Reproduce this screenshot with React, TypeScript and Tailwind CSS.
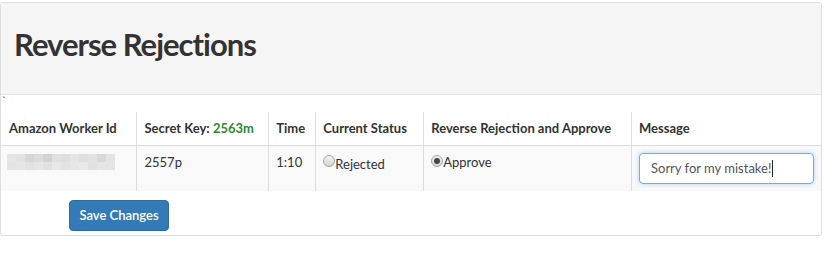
import React from 'react'

const blocks = [
  ['#e6e6e6', '#e2e2e2', '#d6d6d6', '#dcdcdc', '#d2d2d2', '#e0e0e0', '#dedede', '#e4e4e4', '#e0dfdd', '#e2e2e2', '#d8d8d8', '#e3e3e3'],
  ['#e4e4e4', '#e6e6e6', '#e1e1e1', '#e5e5e5', '#e0e0e0', '#e8e8e8', '#e3e3e3', '#e6e6e6', '#e9e9e9', '#e2e1de', '#e6e6e6', '#e4e4e4'],
]

function Mosaic() {
  return (
    <div className="flex flex-col">
      {blocks.map((row, i) => (
        <div key={i} className="flex h-[8px]">
          {row.map((c, j) => (
            <div key={j} className="h-full w-[9px]" style={{ backgroundColor: c }} />
          ))}
        </div>
      ))}
    </div>
  )
}

function Radio({ checked }: { checked?: boolean }) {
  return (
    <span className="relative top-[1px] inline-flex h-[12px] w-[12px] shrink-0 items-center justify-center rounded-full border border-[#a6a6a6] bg-gradient-to-b from-[#f4f4f4] to-[#d4d4d4] align-top">
      {checked && <span className="h-[6px] w-[6px] rounded-full bg-[#444]" />}
    </span>
  )
}

export default function App() {
  return (
    <div className="w-[828px] bg-white pt-[2px] text-[#333]" style={{ fontFamily: 'Lato, "Open Sans", sans-serif' }}>
      <div className="w-[822px] overflow-hidden rounded-[3px] border border-[#dedede] shadow-[0_1px_1px_rgba(0,0,0,0.05)]">
        <div className="flex h-[92px] items-center border-b border-[#e3e3e3] bg-[#f5f5f5] px-[13px] pb-[10px]">
          <h1 className="text-[31px] leading-[36px] font-bold tracking-[-1px] text-[#333]">Reverse Rejections</h1>
        </div>
        <div className="h-[17px] pl-[1px] text-[11px] leading-[11px]">`</div>
        <table className="w-full border-collapse text-[13px] leading-[17px]">
          <thead>
            <tr className="border-b border-[#dddddd]">
              <th className="w-[136px] px-[8px] py-[8px] text-left font-bold">Amazon Worker Id</th>
              <th className="w-[132px] border-l border-[#dddddd] px-[7px] py-[8px] text-left font-bold">
                Secret Key: <span className="text-[#2e8a33]">2563m</span>
              </th>
              <th className="w-[47px] border-l border-[#dddddd] px-[7px] py-[8px] text-left font-bold">Time</th>
              <th className="w-[108px] border-l border-[#dddddd] px-[7px] py-[8px] text-left font-bold">Current Status</th>
              <th className="w-[208px] border-l border-[#dddddd] px-[7px] py-[8px] text-left font-bold">Reverse Rejection and Approve</th>
              <th className="border-l border-[#dddddd] px-[7px] py-[8px] text-left font-bold">Message</th>
            </tr>
          </thead>
          <tbody>
            <tr className="h-[45px] bg-[#f9f9f9] align-top">
              <td className="pt-[8px] pr-[7px] pl-[6px]">
                <Mosaic />
              </td>
              <td className="border-l border-[#dddddd] px-[7px] py-[8px]">2557p</td>
              <td className="border-l border-[#dddddd] px-[7px] py-[8px]">1:10</td>
              <td className="border-l border-[#dddddd] px-[7px] py-[8px]">
                <label className="flex items-start">
                  <Radio />
                  <span className="relative top-[2px]">Rejected</span>
                </label>
              </td>
              <td className="border-l border-[#dddddd] px-[7px] py-[8px]">
                <label className="flex items-start">
                  <Radio checked />
                  <span>Approve</span>
                </label>
              </td>
              <td className="border-l border-[#dddddd] pt-[7px] pr-[7px] pb-[7px] pl-[7px]">
                <div className="flex h-[31px] w-[175px] items-center rounded-[4px] border border-[#66afe9] bg-white px-[11px] shadow-[0_0_5px_rgba(102,175,233,0.5)]">
                  <span className="text-[13px] text-[#555]">Sorry for my mistake!</span>
                  <span className="ml-[1px] h-[17px] w-px bg-[#222]" />
                </div>
              </td>
            </tr>
          </tbody>
        </table>
        <div className="pt-[9px] pb-[4px] pl-[68px]">
          <button className="h-[31px] w-[100px] rounded-[4px] border border-[#2e6da4] bg-[#337ab7] text-[13px] font-semibold text-white">
            Save Changes
          </button>
        </div>
      </div>
    </div>
  )
}
